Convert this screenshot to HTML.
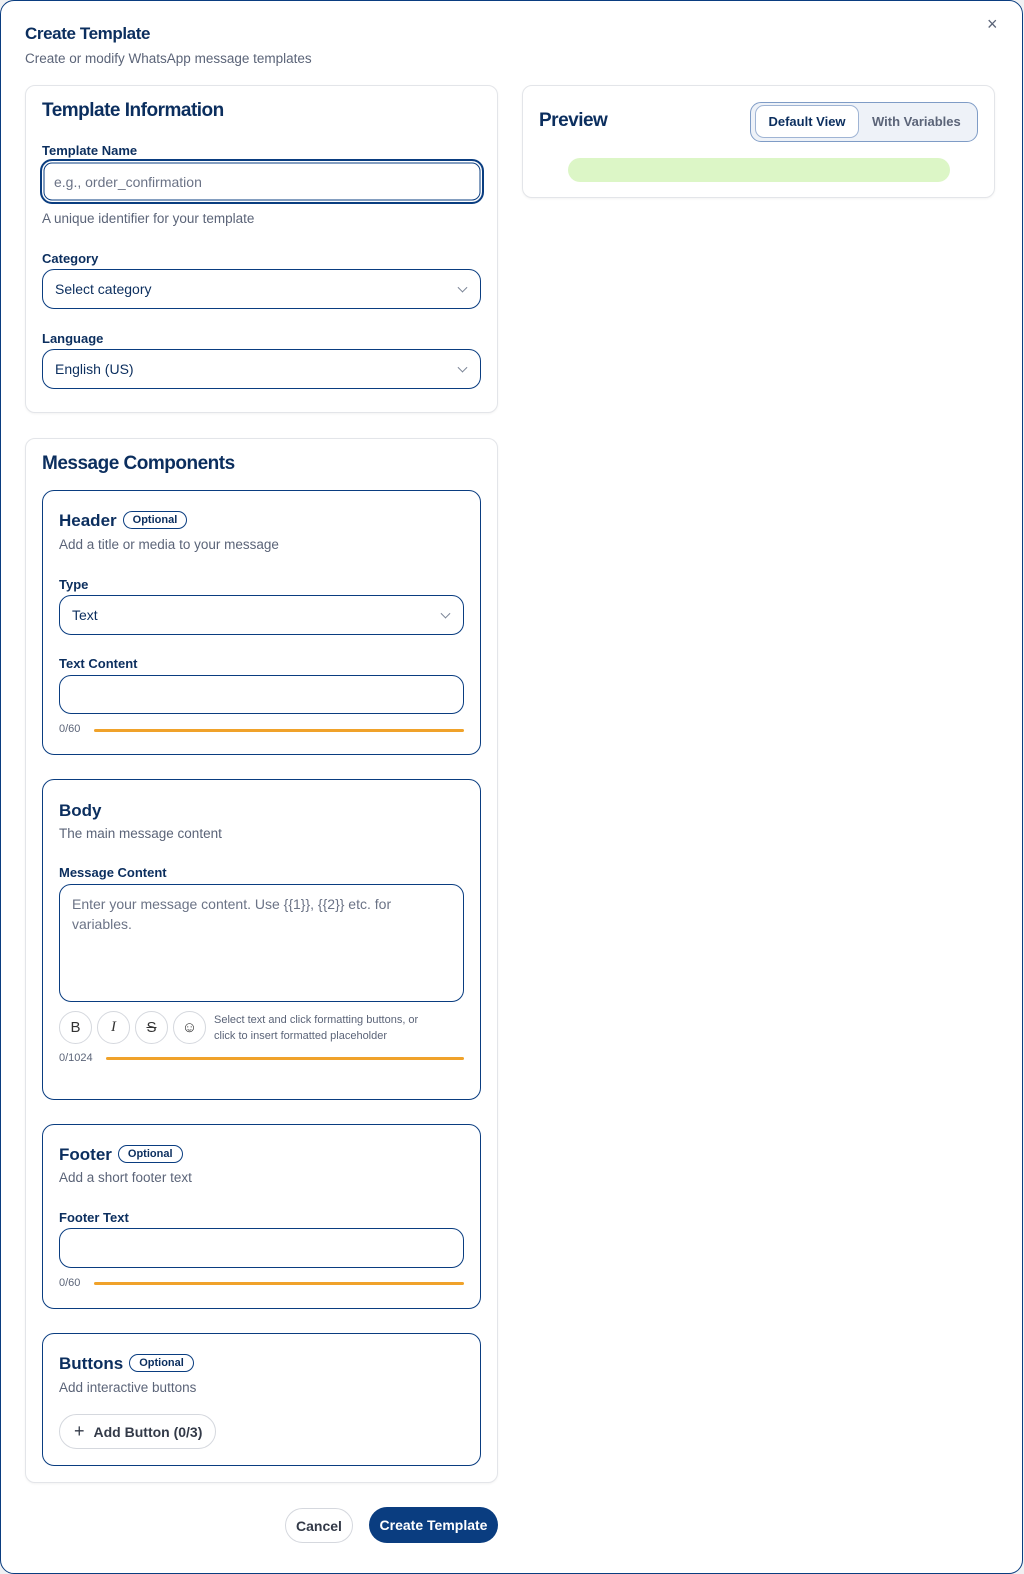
<!DOCTYPE html>
<html><head><meta charset="utf-8"><style>
*{box-sizing:border-box;margin:0;padding:0}
body{width:1024px;height:1574px;background:#f0f1f3;font-family:"Liberation Sans",sans-serif;color:#0b2e5e;position:relative;overflow:hidden}
.frame{position:absolute;left:0;top:0;width:1023px;height:1574px;background:#fff;border:1.5px solid #0a3d80;border-radius:14px}
.a{position:absolute}
.card{position:absolute;border:1px solid #e3e5e9;border-radius:10px;background:#fff;box-shadow:0 1px 2px rgba(0,0,0,.05)}
.sub{position:absolute;border:1.3px solid #0a3d80;border-radius:12px}
.h2{font-size:19px;font-weight:bold;color:#0b2e5e;letter-spacing:-.5px}
.lbl{font-size:13px;font-weight:bold;color:#0b2e5e}
.muted{font-size:13.5px;color:#5b6478}
.inp{position:absolute;border:1.3px solid #0a3d80;border-radius:12px;font-size:14px;color:#0b2e5e;padding-left:12px;display:flex;align-items:center}
.chev{position:absolute;right:14px;top:50%;width:7px;height:7px;border-right:1.3px solid #7a8496;border-bottom:1.3px solid #7a8496;transform:translateY(-70%) rotate(45deg)}
.opt{display:inline-block;border:1.3px solid #0a3d80;border-radius:11px;font-size:11px;font-weight:bold;padding:2px 9px;vertical-align:3px;margin-left:6px;color:#0b2e5e}
.bar{position:absolute;height:3px;background:#f0a22a;border-radius:2px}
.cnt{position:absolute;font-size:11px;color:#5b6478}
.sh{font-size:17px;font-weight:bold;color:#0b2e5e}
.fb{position:absolute;width:33px;height:33px;border:1px solid #d5d8de;border-radius:50%;display:flex;align-items:center;justify-content:center;font-size:15px;color:#333}
</style></head><body>
<div class="frame"></div>
<div class="a" style="left:25px;top:24px;font-size:17px;font-weight:bold;letter-spacing:-.4px">Create Template</div>
<div class="a muted" style="left:25px;top:51px">Create or modify WhatsApp message templates</div>
<div class="a" style="left:987px;top:14px;font-size:18px;color:#5b6478">×</div>

<div class="card" style="left:25px;top:85px;width:473px;height:328px"></div>
<div class="a h2" style="left:42px;top:100px">Template Information</div>
<div class="a lbl" style="left:42px;top:143px">Template Name</div>
<div class="inp" style="left:40px;top:159px;width:444px;height:45px;border:2.5px solid #0a3d80;box-shadow:inset 0 0 0 1.5px #fff,inset 0 0 0 2.5px #0a3d80;color:#6b7386">e.g., order_confirmation</div>
<div class="a muted" style="left:42px;top:211px">A unique identifier for your template</div>
<div class="a lbl" style="left:42px;top:251px">Category</div>
<div class="inp" style="left:42px;top:269px;width:439px;height:40px">Select category<span class="chev"></span></div>
<div class="a lbl" style="left:42px;top:331px">Language</div>
<div class="inp" style="left:42px;top:349px;width:439px;height:40px">English (US)<span class="chev"></span></div>

<div class="card" style="left:522px;top:85px;width:473px;height:113px"></div>
<div class="a h2" style="left:539px;top:110px">Preview</div>
<div class="a" style="left:750px;top:102px;width:228px;height:40px;border:1.3px solid #7f9cc6;border-radius:11px;background:#eef2f8"></div>
<div class="a" style="left:755px;top:105px;width:104px;height:33px;border:1px solid #9fb4d4;border-radius:9px;background:#fff;font-size:13px;font-weight:bold;display:flex;align-items:center;justify-content:center">Default View</div>
<div class="a" style="left:872px;top:114px;font-size:13px;font-weight:bold;color:#5b6478">With Variables</div>
<div class="a" style="left:568px;top:158px;width:382px;height:24px;background:#dcf6c6;border-radius:12px"></div>

<div class="card" style="left:25px;top:438px;width:473px;height:1045px"></div>
<div class="a h2" style="left:42px;top:453px">Message Components</div>

<div class="sub" style="left:42px;top:490px;width:439px;height:265px"></div>
<div class="a sh" style="left:59px;top:511px">Header<span class="opt">Optional</span></div>
<div class="a muted" style="left:59px;top:537px">Add a title or media to your message</div>
<div class="a lbl" style="left:59px;top:577px">Type</div>
<div class="inp" style="left:59px;top:595px;width:405px;height:40px">Text<span class="chev"></span></div>
<div class="a lbl" style="left:59px;top:656px">Text Content</div>
<div class="inp" style="left:59px;top:675px;width:405px;height:39px"></div>
<div class="cnt" style="left:59px;top:723px">0/60</div>
<div class="bar" style="left:94px;top:729px;width:370px"></div>

<div class="sub" style="left:42px;top:779px;width:439px;height:321px"></div>
<div class="a sh" style="left:59px;top:801px">Body</div>
<div class="a muted" style="left:59px;top:826px">The main message content</div>
<div class="a lbl" style="left:59px;top:865px">Message Content</div>
<div class="a" style="left:59px;top:884px;width:405px;height:118px;border:1.3px solid #0a3d80;border-radius:12px;padding:9px 12px;font-size:14px;line-height:20px;color:#6b7386">Enter your message content. Use {{1}}, {{2}} etc. for variables.</div>
<div class="fb" style="left:59px;top:1011px">B</div>
<div class="fb" style="left:97px;top:1011px;font-style:italic;font-family:'Liberation Serif',serif">I</div>
<div class="fb" style="left:135px;top:1011px;text-decoration:line-through">S</div>
<div class="fb" style="left:173px;top:1011px">☺</div>
<div class="a" style="left:214px;top:1012px;font-size:11px;line-height:16px;color:#5b6478">Select text and click formatting buttons, or<br>click to insert formatted placeholder</div>
<div class="cnt" style="left:59px;top:1052px">0/1024</div>
<div class="bar" style="left:106px;top:1057px;width:358px"></div>

<div class="sub" style="left:42px;top:1124px;width:439px;height:185px"></div>
<div class="a sh" style="left:59px;top:1145px">Footer<span class="opt">Optional</span></div>
<div class="a muted" style="left:59px;top:1170px">Add a short footer text</div>
<div class="a lbl" style="left:59px;top:1210px">Footer Text</div>
<div class="inp" style="left:59px;top:1228px;width:405px;height:40px"></div>
<div class="cnt" style="left:59px;top:1277px">0/60</div>
<div class="bar" style="left:94px;top:1282px;width:370px"></div>

<div class="sub" style="left:42px;top:1333px;width:439px;height:133px"></div>
<div class="a sh" style="left:59px;top:1354px">Buttons<span class="opt">Optional</span></div>
<div class="a muted" style="left:59px;top:1380px">Add interactive buttons</div>
<div class="a" style="left:59px;top:1414px;width:157px;height:35px;border:1px solid #d5d8de;border-radius:18px;font-size:14px;font-weight:bold;color:#333a48;display:flex;align-items:center;padding-left:14px"><span style="font-size:18px;font-weight:normal;margin-right:9px">+</span>Add Button (0/3)</div>

<div class="a" style="left:285px;top:1508px;width:68px;height:35px;border:1px solid #d5d8de;border-radius:18px;font-size:14px;font-weight:bold;color:#333a48;display:flex;align-items:center;justify-content:center">Cancel</div>
<div class="a" style="left:369px;top:1507px;width:129px;height:36px;background:#0a3d80;border-radius:18px;font-size:14px;font-weight:bold;color:#fff;display:flex;align-items:center;justify-content:center">Create Template</div>
</body></html>
